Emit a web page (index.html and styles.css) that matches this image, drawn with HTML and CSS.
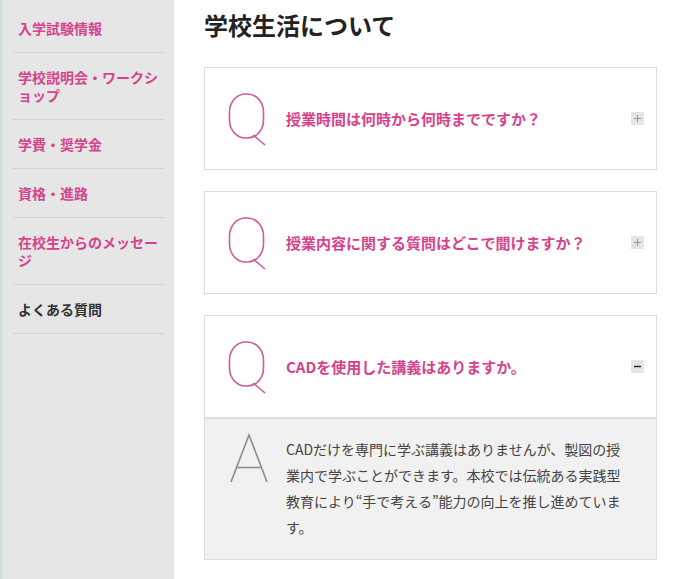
FILE: index.html
```html
<!DOCTYPE html>
<html lang="ja">
<head>
  <meta charset="UTF-8" />
  <meta name="viewport" content="width=device-width, initial-scale=1" />
  <title>よくある質問 | 学校生活について</title>
  <link rel="stylesheet" href="styles.css">
</head>
<body>

<div class="layout">
  <!-- サイドメニュー -->
  <aside class="side-nav">
    <ul>
      <li><a href="#">入学試験情報</a></li>
      <li><a href="#">学校説明会・ワークショップ</a></li>
      <li><a href="#">学費・奨学金</a></li>
      <li><a href="#">資格・進路</a></li>
      <li><a href="#">在校生からのメッセージ</a></li>
      <li class="current"><a href="#">よくある質問</a></li>
    </ul>
  </aside>

  <main class="content">
    <h1 class="page-title">学校生活について</h1>

    <div class="faq">
      <div class="faq-item">
        <div class="faq-q">
          <svg class="mark-q" viewBox="0 0 38 54" width="38" height="54" aria-hidden="true">
            <rect x="1.5" y="1" width="34" height="44" rx="16" ry="18" />
            <line x1="25" y1="42" x2="37" y2="52" />
          </svg>
          <p class="faq-q-text">授業時間は何時から何時までですか？</p>
          <span class="toggle">
            <svg viewBox="0 0 13 13" width="13" height="13"><path d="M3 6.5h7M6.5 3v7" /></svg>
          </span>
        </div>
      </div>

      <div class="faq-item">
        <div class="faq-q">
          <svg class="mark-q" viewBox="0 0 38 54" width="38" height="54" aria-hidden="true">
            <rect x="1.5" y="1" width="34" height="44" rx="16" ry="18" />
            <line x1="25" y1="42" x2="37" y2="52" />
          </svg>
          <p class="faq-q-text">授業内容に関する質問はどこで聞けますか？</p>
          <span class="toggle">
            <svg viewBox="0 0 13 13" width="13" height="13"><path d="M3 6.5h7M6.5 3v7" /></svg>
          </span>
        </div>
      </div>

      <div class="faq-item is-open">
        <div class="faq-q">
          <svg class="mark-q" viewBox="0 0 38 54" width="38" height="54" aria-hidden="true">
            <rect x="1.5" y="1" width="34" height="44" rx="16" ry="18" />
            <line x1="25" y1="42" x2="37" y2="52" />
          </svg>
          <p class="faq-q-text">CADを使用した講義はありますか。</p>
          <span class="toggle">
            <svg viewBox="0 0 13 13" width="13" height="13"><path d="M3 6.5h7" /></svg>
          </span>
        </div>
        <div class="faq-a">
          <svg class="mark-a" viewBox="0 0 38 50" width="38" height="50" aria-hidden="true">
            <path d="M3 48 L21 1 L39 48 M8.5 33.5 H33.5" />
          </svg>
          <p class="faq-a-text">CADだけを専門に学ぶ講義はありませんが、製図の授業内で学ぶことができます。本校では伝統ある実践型教育により“手で考える”能力の向上を推し進めています。</p>
        </div>
      </div>
    </div>
  </main>
</div>

<script>
  // 質問をクリックで回答を開閉
  document.querySelectorAll('.faq-item').forEach((item) => {
    item.querySelector('.faq-q').addEventListener('click', () => {
      item.classList.toggle('is-open');
    });
  });
</script>

</body>
</html>
```

FILE: styles.css
```css
body {
  margin: 0;
  font-family: "Noto Sans CJK JP", "Noto Sans", sans-serif;
  color: #333;
  background: #fff;
}

.layout {
  display: flex;
  min-height: 100vh;
}

/* サイドメニュー */
.side-nav {
  width: 171px;
  flex-shrink: 0;
  background: #e6e6e6;
  border-left: 3px solid #d5dddd;
}

.side-nav ul {
  list-style: none;
  margin: 0;
  padding: 4px 10px 0 10px;
}

.side-nav li {
  border-bottom: 1px solid #d3d3d3;
}

.side-nav a {
  display: block;
  padding: 15px 0 15px 5px;
  font-size: 14px;
  line-height: 18px;
  font-weight: bold;
  color: #d5438d;
  text-decoration: none;
  line-break: loose;
}

.side-nav .current a {
  color: #333;
}

/* メイン */
.content {
  flex: 1;
  padding: 0 30px 20px 30px;
}

.page-title {
  margin: 0 0 26px;
  padding-top: 9px;
  font-size: 24px;
  line-height: 32px;
  font-weight: bold;
  color: #222;
}

.faq-item {
  border: 1px solid #dcdcdc;
  margin-bottom: 21px;
  background: #fff;
}

.faq-q {
  display: flex;
  align-items: center;
  gap: 20px;
  height: 101px;
  padding: 0 12px 0 23px;
  box-sizing: border-box;
  cursor: pointer;
}

.mark-q {
  flex-shrink: 0;
  margin-top: 2px;
  fill: none;
  stroke: #cf5b9d;
  stroke-width: 1.6;
}

.faq-q-text {
  flex: 1;
  margin: 0;
  font-size: 15px;
  font-weight: bold;
  color: #d5438d;
}

.toggle {
  display: flex;
  width: 13px;
  height: 13px;
  background: #e4e4e4;
}

.toggle svg {
  fill: none;
  stroke: #999;
  stroke-width: 1;
}

.is-open .toggle svg {
  stroke: #222;
  stroke-width: 1.4;
}

/* 回答 */
.faq-a {
  display: none;
  gap: 20px;
  padding: 17px 24px 19px 23px;
  background: #f1f1f1;
  border-top: 2px solid #dcdcdc;
}

.is-open .faq-a {
  display: flex;
  align-items: flex-start;
}

.mark-a {
  flex-shrink: 0;
  margin-top: -2px;
  fill: none;
  stroke: #8c8c8c;
  stroke-width: 1.6;
  overflow: visible;
}

.faq-a-text {
  width: 340px;
  margin: 0;
  font-size: 14px;
  line-height: 26px;
  color: #444;
}
```
